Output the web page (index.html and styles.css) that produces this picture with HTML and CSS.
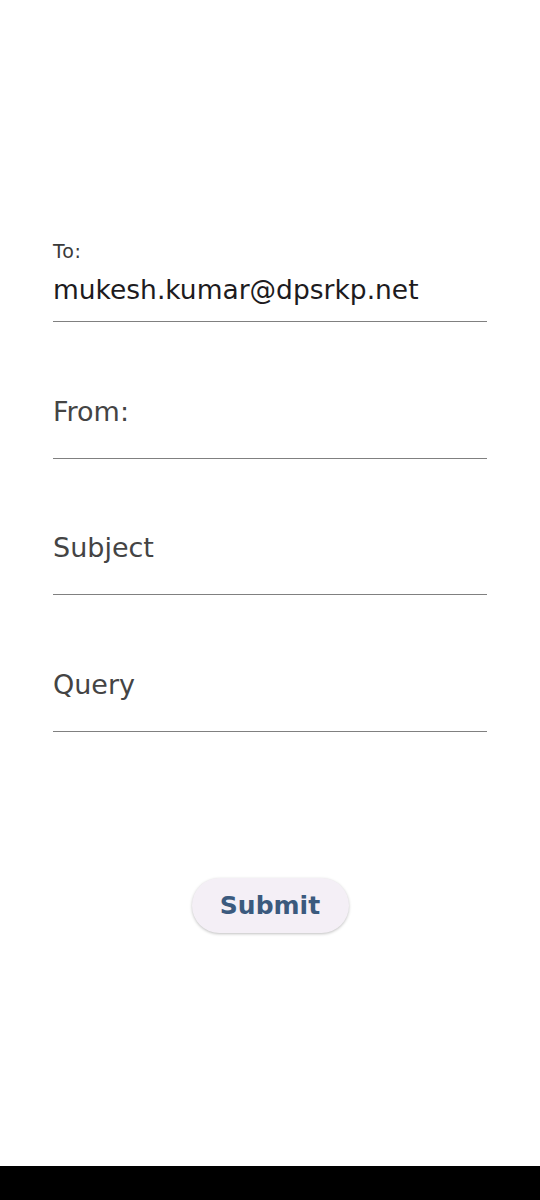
FILE: index.html
```html
<!DOCTYPE html>
<html>
<head>
<meta charset="utf-8">
<link rel="stylesheet" href="styles.css">
</head>
<body>
<div class="page">
  <form class="form">
    <div class="field field-filled">
      <div class="label">To:</div>
      <div class="value">mukesh.kumar@dpsrkp.net</div>
    </div>
    <div class="field">
      <div class="placeholder">From:</div>
    </div>
    <div class="field">
      <div class="placeholder">Subject</div>
    </div>
    <div class="field">
      <div class="placeholder">Query</div>
    </div>
  </form>
  <div class="actions">
    <button class="submit" type="button">Submit</button>
  </div>
  <div class="spacer"></div>
  <div class="navbar"></div>
</div>
</body>
</html>
```
FILE: styles.css
```css
html, body {
  margin: 0;
  padding: 0;
  background: #ffffff;
}
.page {
  width: 540px;
  height: 1200px;
  display: flex;
  flex-direction: column;
  font-family: "DejaVu Sans", Verdana, sans-serif;
}
.form {
  margin: 186px 53px 0 53px;
  display: flex;
  flex-direction: column;
}
.field {
  height: 135.7px;
  border-bottom: 1px solid #808080;
  display: flex;
  flex-direction: column;
  justify-content: flex-end;
}
.field-filled {
  height: 135px;
}
.label {
  font-size: 19px;
  line-height: 24px;
  color: #3a3a3a;
  letter-spacing: 0.8px;
  margin-bottom: 12px;
}
.value {
  font-size: 26.5px;
  line-height: 30px;
  color: #1d1b20;
  margin-bottom: 16px;
}
.placeholder {
  font-size: 27px;
  line-height: 28px;
  color: #444444;
  margin-bottom: 32px;
}
.actions {
  margin-top: 146px;
  display: flex;
  justify-content: center;
}
.submit {
  width: 157px;
  height: 55px;
  border: none;
  border-radius: 28px;
  background: #f4eff6;
  box-shadow: 0 1px 3px rgba(0,0,0,0.25);
  color: #3b5a7e;
  font-family: "DejaVu Sans", Verdana, sans-serif;
  font-weight: bold;
  font-size: 25px;
  line-height: 55px;
  padding: 0 0 0 0;
}
.spacer {
  flex: 1;
}
.navbar {
  height: 34px;
  background: #000000;
}
```
